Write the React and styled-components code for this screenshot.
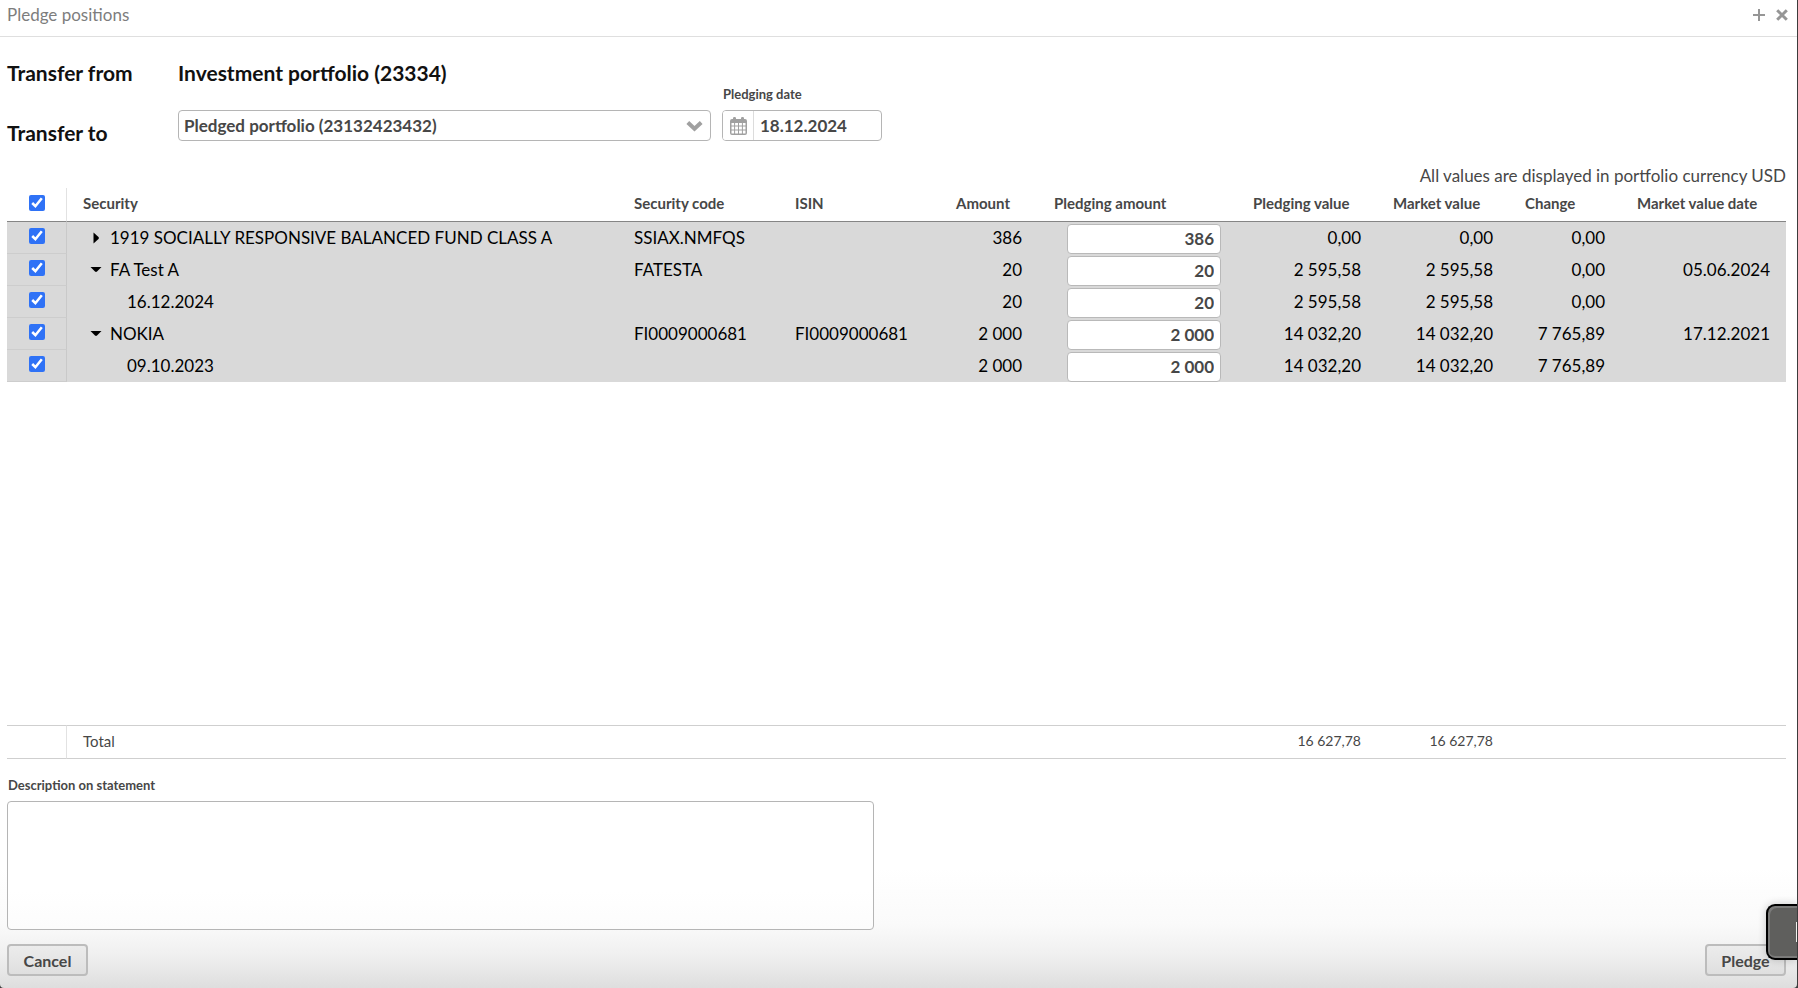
import React, { useState } from "react";
import styled, { createGlobalStyle } from "styled-components";

const GlobalStyle = createGlobalStyle`
  * { box-sizing: border-box; }
  body {
    margin: 0;
    background: #3c3c3c;
    color: #474747;
    font-family: Lato, "Liberation Sans", sans-serif;
    font-size: 17px;
  }
  button, input, select, textarea { font: inherit; color: inherit; margin: 0; }
`;

const Dialog = styled.main`
  position: relative;
  display: flex;
  flex-direction: column;
  min-height: 100vh;
  margin-right: 1px;
  overflow: hidden;
  background: linear-gradient(to top, #dedede 0, #efefef 32px, #fafafa 64px, #fff 120px);
  border-radius: 0 0 4px 4px;
`;

const TitleBar = styled.header`
  display: flex;
  align-items: center;
  justify-content: space-between;
  height: 37px;
  padding: 0 9px 6px 7px;
  border-bottom: 1px solid #dfdfdf;
`;

const Title = styled.h1`
  margin: 0;
  color: #7d7d7d;
  font-size: 17px;
  font-weight: 400;
  line-height: 24px;
`;

const WindowTools = styled.div`
  display: flex;
  gap: 11px;
`;

const ToolButton = styled.button`
  display: flex;
  padding: 0;
  border: 0;
  background: none;
  color: #969696;
`;

const Content = styled.div`
  display: flex;
  flex: 1;
  flex-direction: column;
  padding: 0 11px 12px 7px;
`;

const TransferForm = styled.section`
  display: grid;
  grid-template-columns: 171px 533px 171px;
  grid-template-rows: 46px 47px;
  padding-top: 11px;
`;

const TransferLabel = styled.label`
  align-self: ${(p) => (p.$low ? "end" : "center")};
  padding-top: 4px;
  color: #111;
  font-size: 21px;
  font-weight: 700;
  line-height: 28px;
  margin-bottom: ${(p) => (p.$low ? "-6px" : "0")};
`;

const SelectBox = styled.div`
  display: grid;
  align-self: start;
  margin-top: 16px;
  align-items: center;
  > * { grid-area: 1 / 1; }
  svg { justify-self: end; margin-right: 8px; pointer-events: none; }
`;

const Select = styled.select`
  appearance: none;
  width: 100%;
  height: 31px;
  padding: 0 28px 0 5px;
  border: 1px solid #b5b5b5;
  border-radius: 4px;
  background: #fff;
  font-weight: 700;
`;

const DateField = styled.div`
  display: flex;
  flex-direction: column;
  grid-column: 3;
  grid-row: 1 / span 2;
  margin-left: 11px;
  padding-top: 36px;
`;

const FieldLabel = styled.label`
  padding-left: 1px;
  font-size: 13px;
  font-weight: 700;
  line-height: 20px;
`;

const DateBox = styled.div`
  display: flex;
  height: 31px;
  margin-top: 6px;
  overflow: hidden;
  border: 1px solid #b5b5b5;
  border-radius: 4px;
  background: #fff;
`;

const CalendarButton = styled.button`
  display: flex;
  align-items: center;
  justify-content: center;
  width: 31px;
  padding: 0;
  border: 0;
  border-right: 1px solid #dcdcdc;
  background: #fff;
  color: #a0a0a0;
`;

const DateInput = styled.input`
  flex: 1;
  min-width: 0;
  padding: 0 6px;
  border: 0;
  background: none;
  font-size: 17px;
  font-weight: 700;
`;

const CurrencyNote = styled.p`
  margin: 23px 0 0;
  font-size: 17px;
  line-height: 24px;
  text-align: right;
`;

const TableArea = styled.section`
  flex: 1;
`;

const Table = styled.table`
  width: 100%;
  border-collapse: separate;
  border-spacing: 0;
  table-layout: fixed;
`;

const HeadCell = styled.th`
  height: 34px;
  padding: 0 16px 3px;
  border-bottom: 1px solid #858585;
  font-size: 15px;
  font-weight: 700;
  text-align: left;
  white-space: nowrap;
`;

const SelectHeadCell = styled(HeadCell)`
  padding: 0 0 3px;
  border-right: 1px solid #e2e2e2;
  text-align: center;
`;

const Row = styled.tr`
  background: #d9d9d9;
  color: #000;
`;

const Cell = styled.td`
  height: 32px;
  padding: 0 16px;
  line-height: 30px;
  text-align: ${(p) => (p.$right ? "right" : "left")};
  white-space: nowrap;
`;

const InputCell = styled(Cell)`
  padding: 1px 16px 0;
`;

const SelectCell = styled(Cell)`
  padding: 0;
  border-right: 1px solid #c9c9c9;
  border-bottom: 1px solid #cdcdcd;
  text-align: center;
`;

const Checkbox = styled.input`
  display: block;
  width: 16px;
  height: 16px;
  margin: ${(p) => (p.$head ? "0 auto" : "0 auto 3px")};
  accent-color: #2f72f6;
`;

const Security = styled.div`
  display: flex;
  align-items: center;
  gap: 8px;
  padding-left: ${(p) => (p.$nested ? "44px" : "7px")};
`;

const Expander = styled.button`
  display: flex;
  justify-content: center;
  width: 12px;
  padding: 0;
  border: 0;
  background: none;
  color: #000;
`;

const AmountInput = styled.input`
  display: block;
  width: 154px;
  height: 30px;
  margin-left: auto;
  padding: 1px 6px 0;
  border: 1px solid #b9b9b9;
  border-radius: 4px;
  background: #fff;
  color: #474747;
  font-size: 17px;
  font-weight: 700;
  text-align: right;
`;

const TotalCell = styled.td`
  height: 34px;
  padding: 0 16px 2px;
  border-top: 1px solid #cfcfcf;
  border-bottom: 1px solid #cfcfcf;
  font-size: ${(p) => (p.$right ? "14px" : "15px")};
  line-height: 30px;
  text-align: ${(p) => (p.$right ? "right" : "left")};
  ${(p) => p.$divider && "border-right: 1px solid #e2e2e2;"}
`;

const Description = styled.section`
  display: flex;
  flex-direction: column;
  padding-top: 16px;
`;

const DescriptionBox = styled.textarea`
  display: block;
  width: 867px;
  max-width: 100%;
  height: 129px;
  margin-top: 6px;
  border: 1px solid #b5b5b5;
  border-radius: 4px;
  background: linear-gradient(#fff 70%, #fcfcfc);
  resize: none;
`;

const Actions = styled.footer`
  display: flex;
  justify-content: space-between;
  margin-top: 14px;
`;

const ActionButton = styled.button`
  height: 32px;
  padding: 0 14px;
  min-width: 81px;
  border: 2px solid #bcbcbc;
  border-radius: 4px;
  background: linear-gradient(#ececec, #dfdfdf);
  font-size: 16px;
  font-weight: 700;
`;

const SideTab = styled.div`
  position: absolute;
  right: 0;
  bottom: 28px;
  display: flex;
  align-items: center;
  justify-content: flex-end;
  width: 31px;
  height: 56px;
  border: 2px solid #000;
  border-right: 0;
  border-radius: 9px 0 0 9px;
  background: #5f5f5d;
  box-shadow: inset 2px 2px 0 #7b7b7a, inset 0 -2px 0 #7b7b7a, 0 0 8px rgba(0, 0, 0, 0.2);
`;

const TabMark = styled.span`
  width: 1px;
  height: 20px;
  background: #f1f1ee;
`;

const PlusIcon = () => (
  <svg width="12" height="12" viewBox="0 0 12 12" fill="none" stroke="currentColor" strokeWidth="2">
    <path d="M6 0v12M0 6h12" />
  </svg>
);

const CloseIcon = () => (
  <svg width="12" height="12" viewBox="0 0 12 12" fill="none" stroke="currentColor" strokeWidth="3">
    <path d="M1.2 1.2l9.600 9.600M10.800 1.200l-9.600 9.600" />
  </svg>
);

const ChevronIcon = () => (
  <svg width="17" height="12" viewBox="0 0 17 12" fill="none" stroke="#a0a0a0" strokeWidth="4">
    <path d="M1.8 2.5l6.7 6.3 6.7-6.3" />
  </svg>
);

const CalendarIcon = () => (
  <svg width="17" height="18" viewBox="0 0 17 18">
    <path
      fill="currentColor"
      fillRule="evenodd"
      d="M2 2h1V1.300a1.200 1.200 0 0 1 1.200-1.200h.6A1.200 1.200 0 0 1 6 1.300V2h5v-.7A1.200 1.200 0 0 1 12.200.1h.6A1.200 1.200 0 0 1 14 1.300V2h1a2 2 0 0 1 2 2v12a2 2 0 0 1-2 2H2a2 2 0 0 1-2-2V4a2 2 0 0 1 2-2zM1.500 6v2.500h2.600V6zm3.600 0v2.500h2.900V6zM9 6v2.500h2.900V6zm3.900 0v2.500h2.600V6zM1.500 9.500v3h2.600v-3zm3.600 0v3h2.900v-3zm3.900 0v3h2.900v-3zm3.900 0v3h2.600v-3zM1.500 13.500v3h2.600v-3zm3.600 0v3h2.900v-3zm3.900 0v3h2.900v-3zm3.900 0v3h2.600v-3z"
    />
  </svg>
);

const ArrowIcon = ({ open }) => (
  <svg width="12" height="12" viewBox="0 0 12 12" fill="currentColor">
    {open ? <path d="M0.500 3h11L7 7.600q-1 .900-2 0z" /> : <path d="M3.500 0.500v11l5-4.500q.9-1 0-2z" />}
  </svg>
);

const COLUMN_WIDTHS = [60, null, 161, 161, 98, 199, 140, 132, 112, 165];

const Columns = () => (
  <colgroup>
    {COLUMN_WIDTHS.map((w, i) => (
      <col key={i} width={w || undefined} />
    ))}
  </colgroup>
);

const HEADINGS = [
  "Security", "Security code", "ISIN", "Amount", "Pledging amount",
  "Pledging value", "Market value", "Change", "Market value date",
];

const POSITIONS = [
  { name: "1919 SOCIALLY RESPONSIVE BALANCED FUND CLASS A", open: false, code: "SSIAX.NMFQS", amount: "386", value: "0,00", market: "0,00", change: "0,00" },
  { name: "FA Test A", open: true, code: "FATESTA", amount: "20", value: "2 595,58", market: "2 595,58", change: "0,00", date: "05.06.2024" },
  { name: "16.12.2024", nested: true, amount: "20", value: "2 595,58", market: "2 595,58", change: "0,00" },
  { name: "NOKIA", open: true, code: "FI0009000681", isin: "FI0009000681", amount: "2 000", value: "14 032,20", market: "14 032,20", change: "7 765,89", date: "17.12.2021" },
  { name: "09.10.2023", nested: true, amount: "2 000", value: "14 032,20", market: "14 032,20", change: "7 765,89" },
];

export default function App() {
  const [checked, setChecked] = useState(POSITIONS.map(() => true));
  const toggle = (i) => setChecked((c) => c.map((v, n) => (n === i ? !v : v)));
  const all = checked.every(Boolean);

  return (
    <>
      <GlobalStyle />
      <Dialog>
        <TitleBar>
          <Title>Pledge positions</Title>
          <WindowTools>
            <ToolButton aria-label="Maximize"><PlusIcon /></ToolButton>
            <ToolButton aria-label="Close"><CloseIcon /></ToolButton>
          </WindowTools>
        </TitleBar>

        <Content>
          <TransferForm>
            <TransferLabel as="span">Transfer from</TransferLabel>
            <TransferLabel as="span">Investment portfolio (23334)</TransferLabel>
            <DateField>
              <FieldLabel htmlFor="pledging-date">Pledging date</FieldLabel>
              <DateBox>
                <CalendarButton aria-label="Open calendar"><CalendarIcon /></CalendarButton>
                <DateInput id="pledging-date" defaultValue="18.12.2024" />
              </DateBox>
            </DateField>
            <TransferLabel $low htmlFor="transfer-to">Transfer to</TransferLabel>
            <SelectBox>
              <Select id="transfer-to">
                <option>Pledged portfolio (23132423432)</option>
              </Select>
              <ChevronIcon />
            </SelectBox>
          </TransferForm>

          <CurrencyNote>All values are displayed in portfolio currency USD</CurrencyNote>

          <TableArea>
            <Table>
              <Columns />
              <thead>
                <tr>
                  <SelectHeadCell>
                    <Checkbox $head type="checkbox" aria-label="Select all" checked={all} onChange={() => setChecked(checked.map(() => !all))} />
                  </SelectHeadCell>
                  {HEADINGS.map((h) => <HeadCell key={h}>{h}</HeadCell>)}
                </tr>
              </thead>
              <tbody>
                {POSITIONS.map((p, i) => (
                  <Row key={p.name}>
                    <SelectCell>
                      <Checkbox type="checkbox" aria-label={`Select ${p.name}`} checked={checked[i]} onChange={() => toggle(i)} />
                    </SelectCell>
                    <Cell>
                      <Security $nested={p.nested}>
                        {!p.nested && (
                          <Expander aria-label={`Toggle ${p.name}`} aria-expanded={p.open}><ArrowIcon open={p.open} /></Expander>
                        )}
                        <span>{p.name}</span>
                      </Security>
                    </Cell>
                    <Cell>{p.code}</Cell>
                    <Cell>{p.isin}</Cell>
                    <Cell $right>{p.amount}</Cell>
                    <InputCell><AmountInput aria-label={`Pledging amount ${p.name}`} defaultValue={p.amount} /></InputCell>
                    <Cell $right>{p.value}</Cell>
                    <Cell $right>{p.market}</Cell>
                    <Cell $right>{p.change}</Cell>
                    <Cell $right>{p.date}</Cell>
                  </Row>
                ))}
              </tbody>
            </Table>
          </TableArea>

          <Table>
            <Columns />
            <tbody>
              <tr>
                <TotalCell $divider />
                <TotalCell colSpan={5}>Total</TotalCell>
                <TotalCell $right>16 627,78</TotalCell>
                <TotalCell $right>16 627,78</TotalCell>
                <TotalCell colSpan={2} />
              </tr>
            </tbody>
          </Table>

          <Description>
            <FieldLabel htmlFor="description">Description on statement</FieldLabel>
            <DescriptionBox id="description" />
          </Description>

          <Actions>
            <ActionButton>Cancel</ActionButton>
            <ActionButton>Pledge</ActionButton>
          </Actions>
        </Content>

        <SideTab aria-hidden="true"><TabMark /></SideTab>
      </Dialog>
    </>
  );
}
